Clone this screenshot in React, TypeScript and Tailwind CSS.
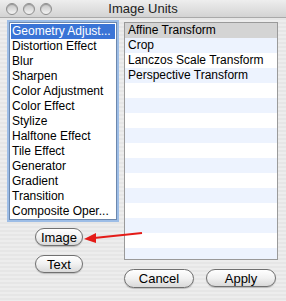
const categories = [
  'Geometry Adjust...',
  'Distortion Effect',
  'Blur',
  'Sharpen',
  'Color Adjustment',
  'Color Effect',
  'Stylize',
  'Halftone Effect',
  'Tile Effect',
  'Generator',
  'Gradient',
  'Transition',
  'Composite Oper...',
];

const units = ['Affine Transform', 'Crop', 'Lanczos Scale Transform', 'Perspective Transform'];

function Light() {
  return (
    <div className="w-[12px] h-[12px] rounded-full border border-[#8e8e8e] bg-gradient-to-b from-[#c4c4c4] to-[#f4f4f4] shadow-[inset_0_1px_1px_rgba(0,0,0,0.25)]" />
  );
}

function Capsule({ label, className }: { label: string; className: string }) {
  return (
    <button
      className={
        'flex items-center justify-center rounded-full border border-[#707070] bg-gradient-to-b from-[#ffffff] via-[#f1f1f1] to-[#d9d9d9] text-[13px] text-black leading-none shadow-[0_1px_1px_rgba(0,0,0,0.2)] ' +
        className
      }
    >
      {label}
    </button>
  );
}

export default function App() {
  const rows = Array.from({ length: 16 }, (_, i) => units[i] ?? '');

  return (
    <div
      className="relative w-[286px] h-[301px] overflow-hidden bg-[repeating-linear-gradient(180deg,#ededed_0px,#ededed_2px,#e6e6e6_2px,#e6e6e6_4px)] text-black"
      style={{ fontFamily: '"Liberation Sans", Arial, sans-serif' }}
    >
      {/* title bar */}
      <div className="grid grid-cols-[1fr_auto_1fr] items-center h-[18px] bg-gradient-to-b from-[#eeeeee] to-[#d3d3d3] border-b border-[#a9a9a9]">
        <div className="flex gap-[5px] pl-[6px]">
          <Light />
          <Light />
          <Light />
        </div>
        <div className="text-[13px] leading-none text-[#222]">Image Units</div>
        <div />
      </div>

      <div className="flex pt-[4px] pl-[9px]">
        {/* left column */}
        <div className="flex flex-col w-[108px]">
          <div className="h-[198px] border border-[#6d88ad] bg-white shadow-[0_0_0_2px_#9dbde6] pt-[1px]">
            {categories.map((c, i) => (
              <div
                key={c}
                className={
                  'mx-[1px] h-[15px] pl-[1px] text-[12px] leading-[15px] whitespace-nowrap ' +
                  (i === 0 ? 'bg-[#3a74d6] text-white' : '')
                }
              >
                {c}
              </div>
            ))}
          </div>
          <div className="flex flex-col gap-[9px] pl-[26px] mt-[8px]">
            <Capsule label="Image" className="w-[48px] h-[18px]" />
            <Capsule label="Text" className="w-[48px] h-[18px]" />
          </div>
        </div>

        {/* right column */}
        <div className="flex flex-col ml-[7px] w-[154px]">
          <div className="h-[238px] border border-[#9a9a9a] bg-white overflow-hidden">
            {rows.map((u, i) => (
              <div
                key={i}
                className={
                  'h-[15px] pl-[3px] text-[12px] leading-[15px] whitespace-nowrap ' +
                  (i === 0 ? 'bg-[#d4d4d4]' : i % 2 === 1 ? 'bg-[#edf3fe]' : 'bg-white')
                }
              >
                {u}
              </div>
            ))}
          </div>
          <div className="flex gap-[12px] mt-[9px]">
            <Capsule label="Cancel" className="w-[70px] h-[19px]" />
            <Capsule label="Apply" className="w-[70px] h-[18px]" />
          </div>
        </div>
      </div>

      {/* annotation arrow */}
      <svg className="absolute left-0 top-0" width="286" height="301" viewBox="0 0 286 301">
        <line x1="142" y1="233" x2="94" y2="238" stroke="#e41b17" strokeWidth="2" />
        <polygon points="84,239 96,233 96,243" fill="#e41b17" />
      </svg>
    </div>
  );
}
